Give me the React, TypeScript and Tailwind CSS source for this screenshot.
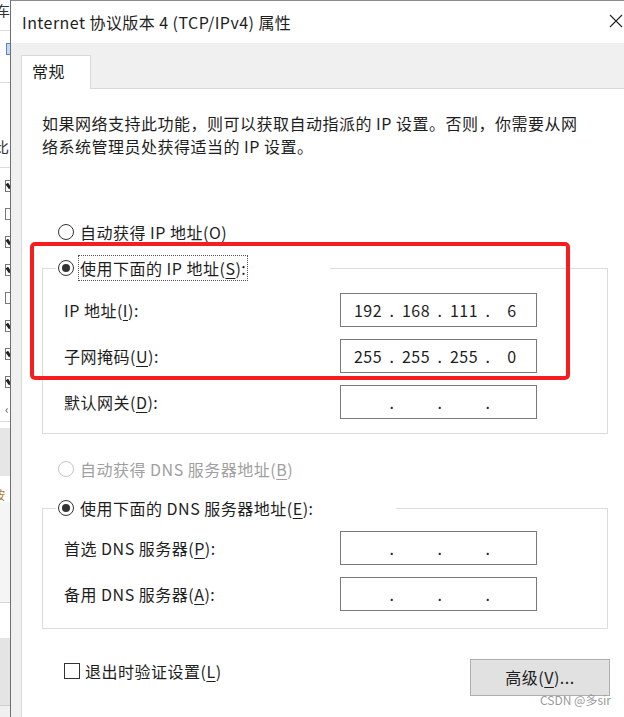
import React from 'react';

// 助记键下划线
const U = ({ children }: { children: React.ReactNode }) => (
  <span className="underline decoration-1 underline-offset-[3px]">{children}</span>
);

function Radio({ checked, disabled }: { checked?: boolean; disabled?: boolean }) {
  return (
    <span
      className={`flex h-[16px] w-[16px] shrink-0 items-center justify-center rounded-full border bg-white ${
        disabled ? 'border-[#c4c4c4]' : 'border-[#333]'
      }`}
    >
      {checked && <span className="h-[8px] w-[8px] rounded-full bg-[#333]" />}
    </span>
  );
}

function RadioLabel({
  children,
  checked,
  disabled,
  focused,
}: {
  children: React.ReactNode;
  checked?: boolean;
  disabled?: boolean;
  focused?: boolean;
}) {
  return (
    <div className={`flex h-[26px] items-center gap-[4px] ${disabled ? 'text-[#a0a0a0]' : ''}`}>
      <Radio checked={checked} disabled={disabled} />
      <span
        className={`flex h-[26px] items-center border px-[1px] ${
          focused ? 'border-dotted border-[#555]' : 'border-transparent'
        }`}
      >
        <span>{children}</span>
      </span>
    </div>
  );
}

function IpBox({ parts }: { parts: string[] }) {
  return (
    <div className="flex h-[34px] w-[197px] items-center border border-[#7a7a7a] bg-white pl-[9px]">
      {parts.map((p, i) => (
        <React.Fragment key={i}>
          {i > 0 && <span className="w-[12px] text-center">.</span>}
          <span className="w-[36px] text-center">{p}</span>
        </React.Fragment>
      ))}
    </div>
  );
}

function Row({ label, parts }: { label: React.ReactNode; parts: string[] }) {
  return (
    <div className="flex items-center">
      <span className="w-[276px]">{label}</span>
      <IpBox parts={parts} />
    </div>
  );
}

function BackWindow() {
  const boxes = [true, false, true, true, false, true, true, true];
  return (
    <div className="flex w-[10px] shrink-0 flex-col overflow-hidden bg-white text-[#333]">
      <div className="h-[30px] pt-[1px] ml-[-4px] text-[14px] leading-[18px]">车</div>
      <div className="h-[1px] bg-[#dcdcdc]" />
      <div className="h-[51px] pt-[12px]">
        <div className="ml-[6px] h-[12px] w-[6px] border border-[#5a84c4] bg-[#c8d9f2]" />
      </div>
      <div className="h-[1px] bg-[#dcdcdc]" />
      <div className="h-[84px] pt-[56px] ml-[-6px] text-[15px] leading-[16px]">比</div>
      <div className="h-[1px] bg-[#dcdcdc]" />
      <div className="flex flex-col pt-[12px]">
        {boxes.map((c, i) => (
          <div key={i} className="h-[28px]">
            <div className="ml-[5px] flex h-[12px] w-[12px] items-center border border-[#777] bg-white pl-[1px]">
              {c && <span className="h-[6px] w-[3px] rotate-[-35deg] bg-[#222]" />}
            </div>
          </div>
        ))}
      </div>
      <div className="h-[17px] pl-[5px] text-[12px] leading-[10px] text-[#555]">‹</div>
      <div className="h-[1px] bg-[#dcdcdc]" />
      <div className="h-[6px]" />
      <div className="h-[48px] bg-[#e6e6e6]" />
      <div className="h-[12px]" />
      <div className="h-[14px] ml-[-7px] text-[12px] leading-[14px] text-[#b0741a]">按</div>
      <div className="h-[100px] bg-[#f5f5f5]" />
      <div className="h-[1px] bg-[#d6d6d6]" />
      <div className="h-[35px]" />
      <div className="h-[67px] bg-[#e4e4e4]" />
      <div className="h-[1px] bg-[#cfcfcf]" />
      <div className="flex-1 bg-[#f0f0f0]" />
    </div>
  );
}

export default function App() {
  return (
    <div className="relative flex h-[717px] w-[624px] overflow-hidden bg-white font-['Noto_Sans_CJK_SC','Noto_Sans',sans-serif] text-[16px] leading-[23px] tracking-[0.5px] text-[#1e1e1e]">
      <BackWindow />

      <div className="flex min-w-0 flex-1 flex-col border-l border-t border-l-[#6f6f6f] border-t-[#8a8a8a]">
        {/* 标题栏 */}
        <div className="flex h-[42px] shrink-0 items-center justify-between bg-white pl-[11px] pr-[1px]">
          <span className="tracking-[0.45px]">Internet 协议版本 4 (TCP/IPv4) 属性</span>
          <svg width="14" height="14" viewBox="0 0 14 14" className="mt-[-2px]">
            <path d="M1 1 L13 13 M13 1 L1 13" stroke="#222" strokeWidth="1.1" />
          </svg>
        </div>

        <div className="flex flex-1 flex-col bg-[#f0f0f0] pl-[10px] pt-[12px]">
          <div className="relative mb-[-1px] flex h-[34px] w-[70px] items-center border border-b-0 border-[#d9d9d9] bg-white pb-[2px] pl-[10px]">
            常规
          </div>

          <div className="flex flex-1 flex-col border-l border-t border-[#d9d9d9] bg-white">
            <p className="pl-[20px] pt-[23px]">
              如果网络支持此功能，则可以获取自动指派的 IP 设置。否则，你需要从网
              <br />
              络系统管理员处获得适当的 IP 设置。
            </p>

            <div className="mt-[61px] pl-[36px]">
              <RadioLabel>
                自动获得 IP 地址(<U>O</U>)
              </RadioLabel>
            </div>

            <fieldset className="ml-[20px] mt-[10px] w-[566px] border border-[#dcdcdc]">
              <legend className="ml-[13px] w-[274px] pl-[2px]">
                <RadioLabel checked focused>
                  使用下面的 IP 地址(<U>S</U>):
                </RadioLabel>
              </legend>
              <div className="flex flex-col gap-[12px] pb-[14px] pl-[21px] pt-[12px]">
                <Row label={<>IP 地址(<U>I</U>):</>} parts={['192', '168', '111', '6']} />
                <Row label={<>子网掩码(<U>U</U>):</>} parts={['255', '255', '255', '0']} />
                <Row label={<>默认网关(<U>D</U>):</>} parts={['', '', '', '']} />
              </div>
            </fieldset>

            <div className="mt-[22px] pl-[36px]">
              <RadioLabel disabled>
                自动获得 DNS 服务器地址(<U>B</U>)
              </RadioLabel>
            </div>

            <fieldset className="ml-[20px] mt-[13px] w-[566px] border border-[#dcdcdc]">
              <legend className="ml-[13px] w-[340px] pl-[2px]">
                <RadioLabel checked>
                  使用下面的 DNS 服务器地址(<U>E</U>):
                </RadioLabel>
              </legend>
              <div className="flex flex-col gap-[12px] pb-[17px] pl-[21px] pt-[10px]">
                <Row label={<>首选 DNS 服务器(<U>P</U>):</>} parts={['', '', '', '']} />
                <Row label={<>备用 DNS 服务器(<U>A</U>):</>} parts={['', '', '', '']} />
              </div>
            </fieldset>

            <div className="mt-[30px] flex items-start justify-between pl-[42px] pr-[14px]">
              <label className="flex h-[24px] items-center gap-[5px]">
                <span className="h-[16px] w-[16px] shrink-0 border border-[#333] bg-white" />
                <span>
                  退出时验证设置(<U>L</U>)
                </span>
              </label>
              <button className="flex h-[37px] w-[140px] items-center justify-center border border-[#adadad] bg-[#e1e1e1]">
                <span>
                  高级(<U>V</U>)...
                </span>
              </button>
            </div>
          </div>
        </div>
      </div>

      {/* 标注红框 */}
      <div className="pointer-events-none absolute left-[30px] top-[242px] h-[138px] w-[540px] rounded-[5px] border-[4px] border-[#f51d1d]" />

      <span className="pointer-events-none absolute right-[13px] top-[692px] text-[12px] leading-[16px] tracking-normal text-[#9a9a9a]">
        CSDN @多sir
      </span>
    </div>
  );
}
